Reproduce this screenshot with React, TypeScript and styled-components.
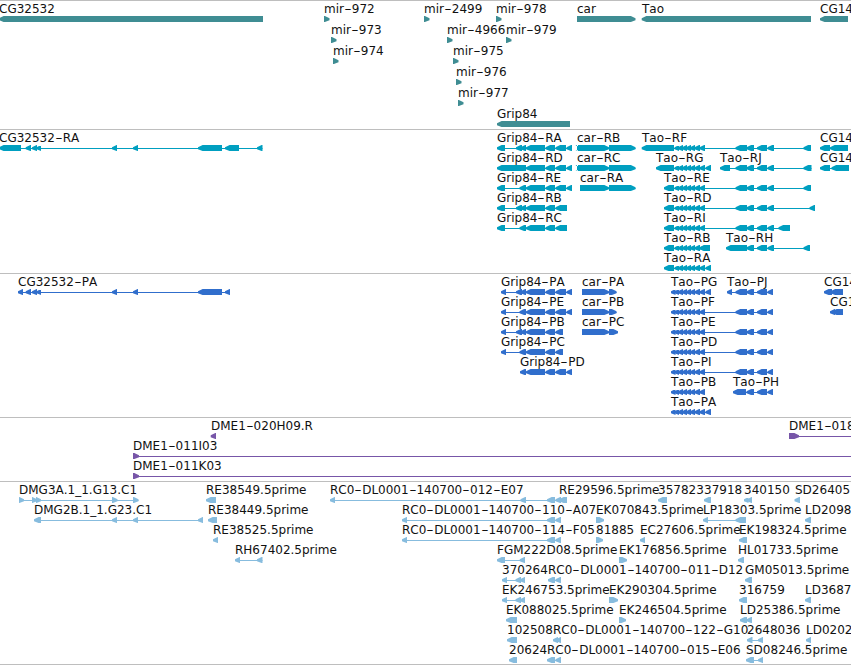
import { Fragment } from "react";
import styled, { createGlobalStyle } from "styled-components";

type Strand = "+" | "-";
type Exon = [number, number];

interface Feature {
  name: string;
  strand: Strand;
  exons: Exon[];
  end?: number;
}

interface TrackData {
  id: string;
  color: string;
  height: number;
  pitch: number;
  rows: Feature[][];
}

const GlobalStyle = createGlobalStyle`
  body {
    margin: 0;
    background-color: #ffffff;
  }
`;

const Browser = styled.main`
  box-sizing: border-box;
  width: 851px;
  height: 665px;
  overflow: hidden;
  color: #111111;
  font-family: "DejaVu Sans", sans-serif;
  font-size: 12px;
  border-bottom: 1px solid #bebebe;
`;

const TrackWrapper = styled.section<{ $height: number }>`
  box-sizing: border-box;
  height: ${props => props.$height}px;
  border-top: 1px solid #bebebe;
`;

const Row = styled.div<{ $pitch: number }>`
  position: relative;
  height: ${props => props.$pitch}px;
`;

const FeatureWrapper = styled.div`
  position: absolute;
  top: 0;
  display: flex;
  flex-direction: column;
`;

const Label = styled.span`
  height: 15px;
  line-height: 17px;
  white-space: nowrap;
  font-kerning: none;
`;

const Dash = styled.span`
  display: inline-block;
  width: 7.8px;
  text-align: center;
  transform: scaleX(1.7);
`;

const Glyph = styled.svg<{ $color: string }>`
  display: block;
  height: 6px;
  overflow: visible;
  fill: ${props => props.$color};
`;

const HEAD = 4.6;

const minus = (name: string, exons: Exon[], end?: number): Feature => ({
  name,
  strand: "-",
  exons,
  end,
});

const plus = (name: string, exons: Exon[], end?: number): Feature => ({
  name,
  strand: "+",
  exons,
  end,
});

const cgStart: Exon[] = [[25.7, 31], [32, 37], [36.5, 41], [112, 117], [133, 138], [198, 222]];

const gripTwo: Exon[] = [[516, 522], [520.5, 526]];
const gripOne: Exon[] = [[519.5, 526]];
const gripBody: Exon[] = [[526, 545], [545.5, 555]];
const gripLong: Exon[] = [...gripBody, [555.5, 566], [566.5, 572]];
const gripShort: Exon[] = [...gripBody, [555.5, 567]];
const gripCoding: Exon[] = [...gripBody, [555.5, 563]];

const taoRun: Exon[] = [
  [674.5, 679],
  [678, 683],
  [682, 687],
  [686, 691],
  [690, 695],
  [694.5, 700],
  [699.5, 705],
];
const taoCodingRun: Exon[] = [[671, 675.5], ...taoRun];
const taoTail: Exon[] = [[746.5, 754], [757, 767], [767.5, 774]];
const taoMid: Exon[] = [[735.5, 747], ...taoTail];
const taoCodingTail: Exon[] = [[746.5, 754], [757, 767], [767.5, 773]];
const taoCodingMid: Exon[] = [[735.5, 747], ...taoCodingTail];

const rcTail: Exon[] = [[547, 555], [555.5, 561]];

const tracks: TrackData[] = [
  {
    id: "gene",
    color: "#3f8d93",
    height: 129,
    pitch: 21,
    rows: [
      [
        minus("CG32532", [[-1, 263]]),
        plus("mir-972", [[324, 329.5]]),
        plus("mir-2499", [[424, 429.5]]),
        plus("mir-978", [[496, 501.5]]),
        plus("car", [[577, 635.5]]),
        minus("Tao", [[641.7, 811]]),
        minus("CG14", [[820, 848]]),
      ],
      [
        plus("mir-973", [[331, 336.5]]),
        plus("mir-4966", [[447, 452.5]]),
        plus("mir-979", [[506, 511.5]]),
      ],
      [plus("mir-974", [[333, 338.5]]), plus("mir-975", [[453, 458.5]])],
      [plus("mir-976", [[456, 461.5]])],
      [plus("mir-977", [[458, 463.5]])],
      [minus("Grip84", [[497, 570]])],
    ],
  },
  {
    id: "transcript",
    color: "#009fc0",
    height: 144,
    pitch: 20,
    rows: [
      [
        minus("CG32532-RA", [[-1, 21], ...cgStart, [225, 239], [257, 262.5]]),
        minus("Grip84-RA", [[497, 505], ...gripTwo, ...gripLong]),
        plus("car-RB", [[577, 580], [578, 609], [609, 635.5]]),
        minus("Tao-RF", [[641.7, 674], ...taoRun, ...taoMid, [803.5, 811]]),
        minus("CG14", [[820, 830], [830, 848]]),
      ],
      [
        minus("Grip84-RD", [[497, 526], ...gripLong]),
        plus("car-RC", [[577, 580], [578, 609], [609, 635.5]]),
        minus("Tao-RG", [[656, 674], ...taoRun, [705.5, 711]]),
        minus("Tao-RJ", [[720, 730], ...taoMid, [803.5, 811.5]]),
        minus("CG14", [[820, 830], [831.5, 849]]),
      ],
      [
        minus("Grip84-RE", [[497, 505], ...gripOne, ...gripLong]),
        plus("car-RA", [[580, 609], [609, 635.5]]),
        minus("Tao-RE", [[664, 674], ...taoRun, ...taoMid, [803.5, 811]]),
      ],
      [
        minus("Grip84-RB", [[497, 505], ...gripTwo, ...gripShort]),
        minus("Tao-RD", [[664, 674], ...taoRun, ...taoMid, [809.5, 815]]),
      ],
      [
        minus("Grip84-RC", [[497, 505], ...gripOne, ...gripShort]),
        minus("Tao-RI", [[664, 674], ...taoRun, ...taoMid, [778.5, 790]]),
      ],
      [
        minus("Tao-RB", [[664, 674], ...taoRun, [700, 710]]),
        minus("Tao-RH", [[726, 747], ...taoTail, [803.5, 810]]),
      ],
      [minus("Tao-RA", [[664, 674], ...taoRun, [705.5, 711]])],
    ],
  },
  {
    id: "cds",
    color: "#306ecc",
    height: 144,
    pitch: 20,
    rows: [
      [
        minus("CG32532-PA", [[18, 23], ...cgStart, [225, 230]]),
        minus("Grip84-PA", [[501, 506], ...gripTwo, ...gripLong]),
        plus("car-PA", [[582, 609], [609, 616.5]]),
        minus("Tao-PG", [...taoCodingRun, [705.5, 711]]),
        minus("Tao-PJ", [[727, 732], ...taoCodingMid]),
        minus("CG14", [[824, 832], [830.5, 843]]),
      ],
      [
        minus("Grip84-PE", [[501, 506], ...gripOne, ...gripLong]),
        plus("car-PB", [[582, 609], [609, 616.5]]),
        minus("Tao-PF", [...taoCodingRun, ...taoCodingMid]),
        minus("CG14", [[830, 835], [832, 843]]),
      ],
      [
        minus("Grip84-PB", [[501, 506], ...gripTwo, ...gripCoding]),
        plus("car-PC", [[582, 609], [609, 618]]),
        minus("Tao-PE", [...taoCodingRun, ...taoCodingMid]),
      ],
      [
        minus("Grip84-PC", [[501, 506], ...gripOne, ...gripCoding]),
        minus("Tao-PD", [...taoCodingRun, ...taoCodingMid]),
      ],
      [
        minus("Grip84-PD", [[520, 526], ...gripLong]),
        minus("Tao-PI", [...taoCodingRun, ...taoCodingMid]),
      ],
      [
        minus("Tao-PB", taoCodingRun),
        minus("Tao-PH", [[733, 746], ...taoCodingTail]),
      ],
      [minus("Tao-PA", [...taoCodingRun, [705.5, 711]])],
    ],
  },
  {
    id: "bac",
    color: "#7756a8",
    height: 64,
    pitch: 20,
    rows: [
      [
        minus("DME1-020H09.R", [[210.7, 216]]),
        plus("DME1-018", [[789, 799]], 851),
      ],
      [plus("DME1-011I03", [[133, 139]], 851)],
      [plus("DME1-011K03", [[133, 139]], 851)],
    ],
  },
  {
    id: "est",
    color: "#87bcde",
    height: 183,
    pitch: 20,
    rows: [
      [
        plus("DMG3A.1_1.G13.C1", [[19, 24], [32, 37], [36, 41], [112, 117.5], [133, 138.5]]),
        minus("RE38549.5prime", [[206, 216]]),
        minus("RC0-DL0001-140700-012-E07", [[330, 335], [520.5, 526], ...rcTail]),
        minus("RE29596.5prime", [[559, 567]]),
        minus("357823", [[658, 667]]),
        minus("37918", [[704, 711]]),
        minus("340150", [[744, 748.5], [747, 752]]),
        minus("SD26405", [[794.5, 800]]),
      ],
      [
        minus("DMG2B.1_1.G23.C1", [[34, 41], [112, 117], [133, 138], [198, 203]]),
        minus("RE38449.5prime", [[208, 217]]),
        minus("RC0-DL0001-140700-110-A07", [[402, 407], ...rcTail]),
        plus("EK070843.5prime", [[596, 604]]),
        minus("LP18303.5prime", [[703, 708], [735.5, 746]]),
        minus("LD2098", [[805, 811]]),
      ],
      [
        minus("RE38525.5prime", [[213, 218]]),
        minus("RC0-DL0001-140700-114-F05", [[402, 407], ...rcTail]),
        plus("81885", [[596, 603]]),
        minus("EC27606.5prime", [[640, 645]]),
        minus("EK198324.5prime", [[739, 747]]),
      ],
      [
        minus("RH67402.5prime", [[235, 240], [257, 262.5]]),
        minus("FGM222D08.5prime", [[497, 505], [519.7, 525]]),
        plus("EK176856.5prime", [[619, 627]]),
        minus("HL01733.5prime", [[738, 744]]),
      ],
      [
        minus("370264", [[502, 507], [515.5, 521], [520, 525]]),
        minus("RC0-DL0001-140700-011-D12", [[548, 555], [555.5, 561]]),
        minus("GM05013.5prime", [[745, 752]]),
      ],
      [
        minus("EK246753.5prime", [[502, 507], [515.5, 521], [520, 525]]),
        plus("EK290304.5prime", [[609, 618]]),
        minus("316759", [[739, 747]]),
        minus("LD3687", [[805, 811]]),
      ],
      [
        minus("EK088025.5prime", [[506, 517]]),
        plus("EK246504.5prime", [[619, 626]]),
        minus("LD25386.5prime", [[740, 747], [746.5, 752]]),
      ],
      [
        minus("102508", [[507, 517]]),
        minus("RC0-DL0001-140700-122-G10", [[553, 558], [556, 561]]),
        minus("2648036", [[747, 752.5], [758, 763]]),
        minus("LD0202", [[806, 811]]),
      ],
      [
        minus("20624", [[509, 517]]),
        minus("RC0-DL0001-140700-015-E06", rcTail),
        minus("SD08246.5prime", [[746, 754], [758, 763]]),
      ],
    ],
  },
];

// Exon box with a slightly blunt arrow head on its downstream side
const exonPath = (start: number, end: number, strand: Strand) =>
  strand === "-"
    ? `M${start} 2.2L${start + HEAD} 0H${end}V6H${start + HEAD}L${start} 4.2Z`
    : `M${end} 2.2L${end - HEAD} 0H${start}V6H${end - HEAD}L${end} 4.2Z`;

const FeatureItem = ({ color, feature }: { color: string; feature: Feature }) => {
  const { exons, name, strand } = feature;
  const origin = Math.round(exons[0][0]);
  const end = feature.end ?? exons[exons.length - 1][1];

  return (
    <FeatureWrapper style={{ left: origin }}>
      <Label>
        {name.split("-").map((part, i) => (
          <Fragment key={i}>
            {i > 0 && <Dash>-</Dash>}
            {part}
          </Fragment>
        ))}
      </Label>
      <Glyph $color={color} width={Math.ceil(end - origin)}>
        {(exons.length > 1 || feature.end) && (
          <rect x={2} y={3} width={end - origin - 2} height={1} />
        )}
        {exons.map(([from, to], i) => (
          <path key={i} d={exonPath(from - origin, to - origin, strand)} />
        ))}
      </Glyph>
    </FeatureWrapper>
  );
};

const Track = ({ track }: { track: TrackData }) => (
  <TrackWrapper $height={track.height}>
    {track.rows.map((row, i) => (
      <Row key={i} $pitch={track.pitch}>
        {row.map((feature, j) => (
          <FeatureItem key={j} color={track.color} feature={feature} />
        ))}
      </Row>
    ))}
  </TrackWrapper>
);

const App = () => (
  <>
    <GlobalStyle />
    <Browser>
      {tracks.map(track => (
        <Track key={track.id} track={track} />
      ))}
    </Browser>
  </>
);

export default App;
